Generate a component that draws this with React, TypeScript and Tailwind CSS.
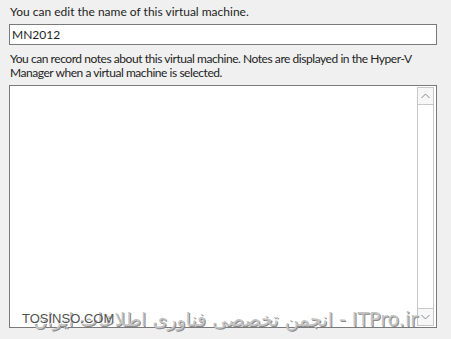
export default function App() {
  return (
    <div className="relative w-[451px] h-[339px] overflow-hidden bg-[#f0f0f0] text-[12px] text-[#1e1e1e] font-['Lato',sans-serif]">
      <div className="flex flex-col pl-[9px] pt-[4px] w-[437px]">
        {/* Nombre */}
        <p className="pl-px leading-[15px]">You can edit the name of this virtual machine.</p>
        <div className="mt-[5px] h-[21px] border border-[#7a7a7a] bg-white flex items-center px-[2px] leading-none">
          MN2012
        </div>

        {/* Notas */}
        <p className="mt-[7px] pl-px leading-[14px] tracking-[-0.45px] whitespace-nowrap">
          You can record notes about this virtual machine. Notes are displayed in the Hyper-V
          <br />
          Manager when a virtual machine is selected.
        </p>
        <div className="mt-[5px] h-[243px] border border-[#7a7a7a] bg-white flex justify-end p-px pr-[2px]">
          <div className="w-[17px] flex flex-col border border-[#c8c8c8] bg-[#f7f7f7]">
            <div className="h-[17px] border-b border-[#c8c8c8] flex items-center justify-center">
              <svg width="9" height="6" viewBox="0 0 9 6" fill="none" stroke="#8a8a8a" strokeWidth="1">
                <path d="M0.5 5 L4.5 1 L8.5 5" />
              </svg>
            </div>
            <div className="flex-1 bg-white" />
            <div className="h-[17px] border-t border-[#c8c8c8] flex items-center justify-center">
              <svg width="9" height="6" viewBox="0 0 9 6" fill="none" stroke="#8a8a8a" strokeWidth="1">
                <path d="M0.5 1 L4.5 5 L8.5 1" />
              </svg>
            </div>
          </div>
        </div>
      </div>

      {/* Marca de agua */}
      <span className="absolute right-[33px] top-[306px] whitespace-nowrap text-[19px] leading-[26px] text-[#c4c4c4] font-['DejaVu_Sans',sans-serif] [text-shadow:1px_1px_0_#8a8a8a]" dir="rtl">
        ITPro.ir - انجمن تخصصی فناوری اطلاعات ایران
      </span>
      <span className="absolute left-[22px] top-[311px] text-[13px] leading-[15px] text-[#505050] font-['Liberation_Sans',sans-serif] [text-shadow:1px_1px_0_#ffffff]">
        TOSINSO.COM
      </span>
    </div>
  );
}
